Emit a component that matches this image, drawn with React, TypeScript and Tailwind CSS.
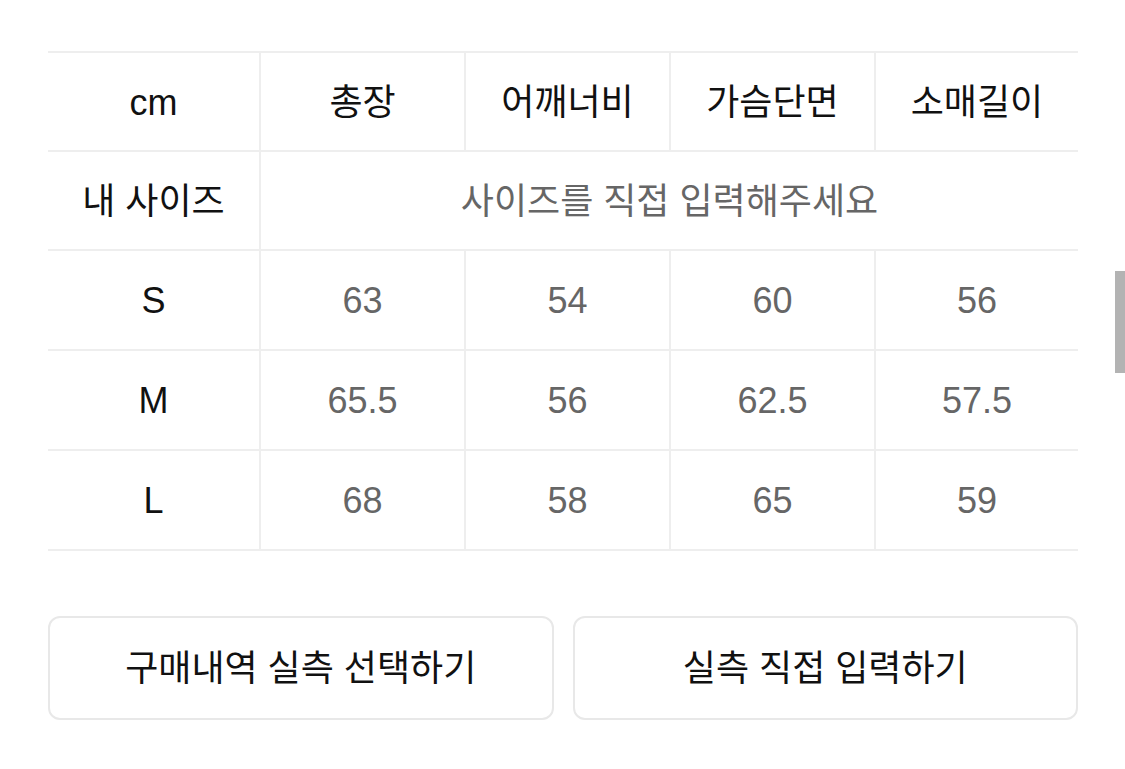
const columns = ['총장', '어깨너비', '가슴단면', '소매길이'];

const rows = [
  { size: 'S', values: ['63', '54', '60', '56'] },
  { size: 'M', values: ['65.5', '56', '62.5', '57.5'] },
  { size: 'L', values: ['68', '58', '65', '59'] },
];

const font = { fontFamily: '"Liberation Sans", "Noto Sans CJK KR", sans-serif' };

function Cell({ children, muted, last, tall }: { children: React.ReactNode; muted?: boolean; last?: boolean; tall?: boolean }) {
  return (
    <div
      className={`flex items-center justify-center border-b-2 border-[#eeeeee] pt-[2px] text-[36px] ${
        tall ? 'h-[100px]' : 'h-[99px]'
      } ${last ? '' : 'border-r-2'} ${muted ? 'text-[#666666]' : 'text-[#111111]'}`}
    >
      {children}
    </div>
  );
}

export default function App() {
  return (
    <div className="relative min-h-[769px] w-[1125px] bg-white" style={font}>
      <div className="pl-[48px] pr-[47px] pt-[51px]">
        {/* Size table */}
        <div className="grid grid-cols-[213px_205px_205px_205px_1fr] border-t-2 border-[#eeeeee]">
          <Cell>cm</Cell>
          {columns.map((c, i) => (
            <Cell key={c} last={i === columns.length - 1}>
              {c}
            </Cell>
          ))}

          <Cell>내 사이즈</Cell>
          <div className="col-span-4 flex h-[99px] items-center justify-center border-b-2 border-[#eeeeee] pt-[2px] text-[36px] text-[#666666]">
            사이즈를 직접 입력해주세요
          </div>

          {rows.map((r) => (
            <div key={r.size} className="contents">
              <Cell tall>{r.size}</Cell>
              {r.values.map((v, i) => (
                <Cell key={i} tall muted last={i === r.values.length - 1}>
                  {v}
                </Cell>
              ))}
            </div>
          ))}
        </div>

        {/* Actions */}
        <div className="mt-[65px] grid grid-cols-2 gap-[19px]">
          <button className="flex h-[104px] items-center justify-center rounded-[12px] border-2 border-[#e8e8e8] bg-white pt-[2px] text-[36px] text-[#111111]">
            구매내역 실측 선택하기
          </button>
          <button className="flex h-[104px] items-center justify-center rounded-[12px] border-2 border-[#e8e8e8] bg-white pt-[2px] text-[36px] text-[#111111]">
            실측 직접 입력하기
          </button>
        </div>
      </div>

      {/* scrollbar thumb */}
      <div className="absolute right-0 top-[271px] h-[102px] w-[10px] bg-[#b3b3b3]" />
    </div>
  );
}
